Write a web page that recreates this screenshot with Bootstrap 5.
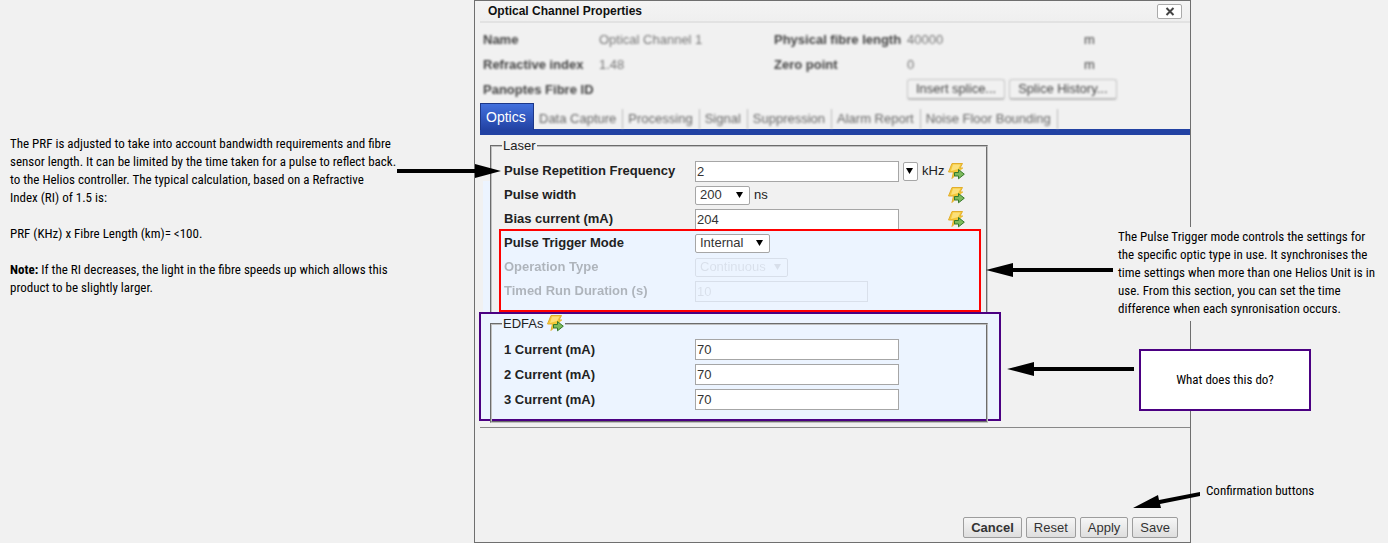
<!DOCTYPE html>
<html lang="en">
<head>
<meta charset="utf-8">
<meta name="viewport" content="width=device-width, initial-scale=1">
<title>Optical Channel Properties</title>
<link rel="stylesheet" href="https://cdn.jsdelivr.net/npm/bootstrap@5.3.0/dist/css/bootstrap.min.css">
<script src="https://cdn.jsdelivr.net/npm/bootstrap@5.3.0/dist/js/bootstrap.bundle.min.js"></script>
<style>
  :root { --page: #f1f1f1; --tint: #ecf4ff; --purple: #4b0082; --line: #6f6f6f; }
  body { background: var(--page); color: #222; font: 13px/18px "Liberation Sans", Arial, sans-serif; }
  .guide { display: grid; grid-template-columns: 474fr 717fr 197fr; min-height: 100vh; }
  .note { font: 13px/18px "Roboto Condensed", "Liberation Sans Narrow", Roboto, sans-serif; color: #000; }
  .note-left { padding: 135px 0 0 10px; white-space: nowrap; }
  .note-left p { margin-bottom: 18px; }
  .dialog-box { border: 1px solid var(--line); padding-left: 5px; }
  .title-bar { height: 22px; padding: 0 8px; border-bottom: 2px solid #e2e2e2; background: linear-gradient(#f4f4f4, #efefef); }
  .title-bar h1 { font-size: 12px; line-height: 20px; color: #111; }
  .close-btn { width: 25px; height: 15px; margin-top: 3px; padding: 0; background: #fff; border: 1px solid #aaa; border-radius: 2px; line-height: 0; }
  .hazy { filter: blur(1px); color: #444; }
  .summary { display: grid; grid-template-columns: 116px 175px 133px 177px 1fr; grid-auto-rows: 25px; align-items: center; padding: 4px 0 0 3px; }
  .summary label, .summary .caption-text { font-weight: bold; white-space: nowrap; }
  .summary input { border: 0; padding: 0; background: transparent; color: #777; width: 150px; }
  .soft-btn { height: 21px; padding: 0 8px; border: 1px solid #c4c4c4; border-bottom: 2px solid #bbb; border-radius: 3px; background: #f1f1f1; color: #444; white-space: nowrap; }
  .tab-strip { height: 32px; margin-top: 1px; border-bottom: 6px solid #2242a3; align-items: flex-end; }
  .tab-strip .nav-link { padding: 0 6px 0 5px; color: #666; border-right: 1px solid #bbb; line-height: 20px; white-space: nowrap; }
  .tab-strip .current { align-self: flex-start; width: 54px; height: 27px; padding: 4px 0 0 5px; border: 1px solid #1c3789; border-bottom: 0; background: linear-gradient(#4270dd, #2242a3); color: #fff; font-size: 14px; line-height: 18px; }
  .panel { padding: 2px 0 6px 10px; border-bottom: 1px solid #888; }
  fieldset.group { position: relative; width: 498px; border: 2px groove #c0c0c0; padding: 0 0 0 12px; }
  fieldset.group > legend { float: none; width: auto; margin: 0 0 0 -2px; padding: 0 1px; font-size: 13px; line-height: 18px; }
  .field-row { display: grid; grid-template-columns: 191px 1fr; align-items: center; height: 24px; }
  .field-row > label { font-weight: bold; color: #222; }
  .edfa .field-row { height: 25px; }
  fieldset.edfa { padding-bottom: 9px; }
  .text-in { width: 204px; height: 21px; padding: 0 1px; border: 1px solid #a6a6a6; background: #fff; color: #333; border-radius: 0; }
  .pick { appearance: none; height: 19px; padding: 0 4px; border: 1px solid #a6a6a6; border-radius: 2px; color: #333; line-height: 16px;
    background: #fff url("data:image/svg+xml,%3Csvg xmlns='http://www.w3.org/2000/svg' width='7' height='6'%3E%3Cpath d='M0 0h7L3.5 6z'/%3E%3C/svg%3E") no-repeat right 6px center; }
  .pick-sm { width: 15px; padding: 0; background-position: 2px center; color: transparent; }
  .off { opacity: .3; }
  .field-row .off-ctl:disabled { opacity: .08; background-color: transparent; border-color: #000; color: #000; }
  .flash { width: 17px; height: 17px; flex: none; }
  .row-end { margin: 0 21px 0 auto; }
  .red-zone { position: relative; width: 482px; margin: -2px 0 0 -5px; padding: 0 0 7px 3px; border: 2px solid #f00; background: var(--tint); }
  .purple-zone { position: relative; width: 522px; margin: -2px 0 0 -11px; padding: 1px 0 0 9px; height: 109px; border: 2px solid var(--purple); background: var(--tint); }
  .tint-strip { position: absolute; left: -9px; width: 7px; top: 26px; bottom: -2px; background: var(--tint); }
  .arrow { position: absolute; z-index: 2; fill: #000; }
  .callout { position: absolute; z-index: 1; background: var(--page); }
  .foot-btn { height: 21px; padding: 0 7px; border: 1px solid #9d9d9d; border-radius: 2px; background: linear-gradient(#f6f6f6, #dedede); color: #333; line-height: 18px; }
</style>
</head>
<body>
<svg class="d-none">
  <symbol id="flash" viewBox="0 0 17 17">
    <path d="M4 .5h10.500L12 5h3l-4 4-7 6.500L5.500 9H.5z" fill="#f4c838"/>
    <path d="M5 1.500h7.500L10 6 3 8z" fill="#fbe07a"/>
    <path d="M4 .5h10.500L12 5h3M.5 9h5L4 15.500l2.500-2.500M4 .5L.5 9" fill="none" stroke="#e2ae2c"/>
    <path d="M6.500 9.500h4V6.500l5.800 4.700-5.800 4.600v-2.800h-4z" fill="#7dba5c" stroke="#35792a"/>
  </symbol>
</svg>
<main class="guide">
  <aside class="note note-left">
    <p>The PRF is adjusted to take into account bandwidth requirements and fibre<br>sensor length. It can be limited by the time taken for a pulse to reflect back.<br>to the Helios controller. The typical calculation, based on a Refractive<br>Index (RI) of 1.5 is:</p>
    <p>PRF (KHz) x Fibre Length (km)= &lt;100.</p>
    <p><strong>Note:</strong> If the RI decreases, the light in the fibre speeds up which allows this<br>product to be slightly larger.</p>
  </aside>

  <form class="dialog-box d-flex flex-column position-relative">
    <header class="title-bar d-flex justify-content-between align-items-start">
      <h1 class="fw-bold m-0">Optical Channel Properties</h1>
      <button type="button" class="close-btn" aria-label="Close">
        <svg width="10" height="9" viewBox="0 0 10 9"><path d="M1.500 1l7 7M8.500 1l-7 7" stroke="#444" stroke-width="2"/></svg>
      </button>
    </header>

    <div class="summary hazy">
      <label for="name">Name</label><input id="name" value="Optical Channel 1">
      <label for="len">Physical fibre length</label><input id="len" value="40000"><span>m</span>
      <label for="ri">Refractive index</label><input id="ri" value="1.48">
      <label for="zero">Zero point</label><input id="zero" value="0"><span>m</span>
      <span class="caption-text">Panoptes Fibre ID</span><span></span><span></span>
      <div class="d-flex gap-1"><button type="button" class="soft-btn">Insert splice...</button><button type="button" class="soft-btn">Splice History...</button></div>
    </div>

    <nav class="nav tab-strip flex-nowrap">
      <a class="nav-link current" href="#optics">Optics</a>
      <div class="d-flex hazy">
        <a class="nav-link" href="#capture">Data Capture</a>
        <a class="nav-link" href="#processing">Processing</a>
        <a class="nav-link" href="#signal">Signal</a>
        <a class="nav-link" href="#suppression">Suppression</a>
        <a class="nav-link" href="#alarm">Alarm Report</a>
        <a class="nav-link" href="#noise">Noise Floor Bounding</a>
      </div>
    </nav>

    <div class="panel" id="optics">
      <fieldset class="group">
        <legend>Laser</legend>
        <div class="tint-strip"></div>
        <div class="field-row mt-1 position-relative">
          <svg class="arrow" style="left:-107px;top:5px" width="104" height="14"><path d="M0 5h78V0l26 7-26 7V9H0z"/></svg>
          <label for="prf">Pulse Repetition Frequency</label>
          <div class="d-flex align-items-center gap-1">
            <input class="text-in" id="prf" value="2">
            <select class="pick pick-sm" aria-label="Preset"><option>2</option></select>
            <span>kHz</span>
            <svg class="flash row-end"><use href="#flash"/></svg>
          </div>
        </div>
        <div class="field-row">
          <label for="pw">Pulse width</label>
          <div class="d-flex align-items-center gap-1">
            <select class="pick" id="pw" style="width:55px"><option>200</option></select>
            <span>ns</span>
            <svg class="flash row-end"><use href="#flash"/></svg>
          </div>
        </div>
        <div class="field-row">
          <label for="bias">Bias current (mA)</label>
          <div class="d-flex align-items-center">
            <input class="text-in" id="bias" value="204">
            <svg class="flash row-end"><use href="#flash"/></svg>
          </div>
        </div>
        <div class="red-zone">
          <div class="field-row">
            <label for="mode">Pulse Trigger Mode</label>
            <select class="pick" id="mode" style="width:75px"><option>Internal</option></select>
          </div>
          <div class="field-row">
            <label class="off" for="op">Operation Type</label>
            <select class="pick off-ctl" id="op" style="width:93px" disabled><option>Continuous</option></select>
          </div>
          <div class="field-row">
            <label class="off" for="dur">Timed Run Duration (s)</label>
            <input class="text-in off-ctl" id="dur" style="width:173px" value="10" disabled>
          </div>
          <svg class="arrow" style="left:485px;top:32px" width="127" height="14"><path d="M127 5H27V0L0 7l27 7V9h100z"/></svg>
          <div class="callout note text-nowrap" style="left:617px;top:-4px;padding:1px 0 3px">The Pulse Trigger mode controls the settings for<br>the specific optic type in use. It synchronises the<br>time settings when more than one Helios Unit is in<br>use. From this section, you can set the time<br>difference when each synronisation occurs.</div>
        </div>
      </fieldset>

      <div class="purple-zone">
        <fieldset class="group edfa">
          <legend>EDFAs <svg class="flash align-top"><use href="#flash"/></svg></legend>
          <div class="field-row mt-1"><label for="c1">1 Current (mA)</label><input class="text-in" id="c1" value="70"></div>
          <div class="field-row"><label for="c2">2 Current (mA)</label><input class="text-in" id="c2" value="70"></div>
          <div class="field-row"><label for="c3">3 Current (mA)</label><input class="text-in" id="c3" value="70"></div>
        </fieldset>
        <svg class="arrow" style="left:526px;top:48px" width="127" height="14"><path d="M127 5H27V0L0 7l27 7V9h100z"/></svg>
        <div class="callout note bg-white d-flex align-items-center justify-content-center text-nowrap" style="left:658px;top:35px;width:172px;height:62px;border:2px solid var(--purple)">What does this do?</div>
      </div>
    </div>

    <footer class="d-flex justify-content-end gap-1 mt-auto pe-2 pb-1 me-1 position-relative">
      <button type="button" class="foot-btn fw-bold">Cancel</button>
      <button type="reset" class="foot-btn">Reset</button>
      <button type="button" class="foot-btn">Apply</button>
      <button type="submit" class="foot-btn">Save</button>
      <svg class="arrow" style="right:-15px;bottom:30px" width="68" height="20"><path d="M0 16L25 3l1 5 41-8v4l-40 8 1 4z"/></svg>
      <div class="callout note text-nowrap" style="left:calc(100% + 20px);bottom:42px">Confirmation buttons</div>
    </footer>
  </form>
</main>
</body>
</html>
